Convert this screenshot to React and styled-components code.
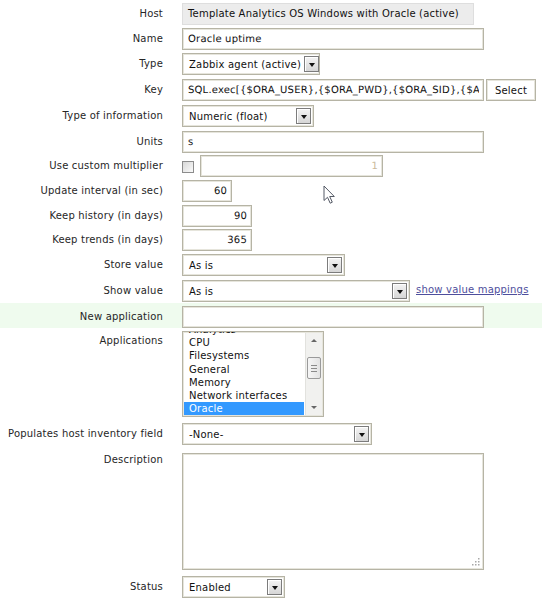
import React from "react";
import styled, { createGlobalStyle } from "styled-components";

const GlobalStyle = createGlobalStyle`
  html, body { margin: 0; padding: 0; background: #fff; }
  body {
    font-family: "DejaVu Sans", Verdana, sans-serif;
    font-size: 10px;
    letter-spacing: 0.2px;
    color: #222;
  }
`;

const Form = styled.div`
  position: relative;
  width: 542px;
  height: 600px;
  overflow: hidden;
`;

const Row = styled.div`
  display: grid;
  grid-template-columns: 182px 1fr;
  box-sizing: border-box;
  height: ${(p) => p.$h || 25}px;
  padding-top: 3px;
  background: ${(p) => (p.$highlight ? "#effbee" : "transparent")};
`;

const Label = styled.div`
  text-align: right;
  padding-right: 19px;
  padding-top: ${(p) => p.$top ?? 4}px;
  line-height: 14px;
  color: #262626;
  white-space: nowrap;
`;

const Field = styled.div`
  display: flex;
  align-items: flex-start;
  gap: ${(p) => p.$gap ?? 2}px;
`;

const frame = `
  box-sizing: border-box;
  border: 1px solid #b6b4a5;
  box-shadow: inset 0 0 0 1px #e6e5dc;
  background: #fff;
`;

const TextBox = styled.input`
  ${frame}
  width: ${(p) => p.$w}px;
  height: 22px;
  margin: 0;
  padding: 0 4px 0 5px;
  font: inherit;
  letter-spacing: inherit;
  line-height: 20px;
  text-rendering: geometricPrecision;
  color: ${(p) => (p.disabled ? "#c9b89a" : "#111")};
  text-align: ${(p) => p.$align || "left"};
  outline: none;
  &:disabled { background: #fff; }
`;

const StaticBox = styled.div`
  box-sizing: border-box;
  width: ${(p) => p.$w}px;
  height: 22px;
  padding: 0 5px;
  line-height: 20px;
  border: 1px solid #dedede;
  background: #ececec;
  color: #111;
  white-space: nowrap;
  overflow: hidden;
`;

const Dropdown = styled.div`
  ${frame}
  width: ${(p) => p.$w}px;
  height: 22px;
  display: flex;
  align-items: center;
  justify-content: space-between;
  gap: 3px;
  padding: 0 2px 0 6px;
  color: #111;
  white-space: nowrap;
`;

const DropArrow = styled.span`
  box-sizing: border-box;
  flex: none;
  width: 15px;
  height: 16px;
  border: 1px solid #7c7c7c;
  background: linear-gradient(#f4f4f4, #d6d6d6);
  box-shadow: inset 1px 1px 0 #fff;
  display: flex;
  align-items: center;
  justify-content: center;
  &::after {
    content: "";
    margin-top: 2px;
    border-left: 3.5px solid transparent;
    border-right: 3.5px solid transparent;
    border-top: 4px solid #111;
  }
`;

const Button = styled.button`
  ${frame}
  width: 50px;
  height: 22px;
  margin: 0;
  padding: 0;
  font: inherit;
  letter-spacing: inherit;
  color: #111;
`;

const Checkbox = styled.span`
  box-sizing: border-box;
  flex: none;
  width: 12px;
  height: 12px;
  margin: 6px 4px 0 0;
  border: 1px solid #8c8c8c;
  background: linear-gradient(135deg, #d8d8d8, #fafafa);
`;

const Link = styled.a`
  margin-left: 4px;
  line-height: 20px;
  color: #4e4e9c;
  text-decoration: underline;
  white-space: nowrap;
`;

const ListBox = styled.div`
  ${frame}
  width: 142px;
  height: 86px;
  display: flex;
  overflow: hidden;
`;

const ListItems = styled.div`
  flex: 1;
  padding: 1px 1px 0 1px;
  margin-top: -10px;
`;

const ListItem = styled.div`
  height: 13.2px;
  line-height: 13px;
  padding-left: 5px;
  white-space: nowrap;
  color: ${(p) => (p.$selected ? "#fff" : "#111")};
  background: ${(p) => (p.$selected ? "#3399ff" : "transparent")};
`;

const ScrollTrack = styled.div`
  flex: none;
  width: 16px;
  margin: 1px 1px 1px 0;
  background: #f1f1ef;
  border-left: 1px solid #e2e2de;
  display: flex;
  flex-direction: column;
  align-items: center;
`;

const ScrollArrow = styled.span`
  width: 0;
  height: 0;
  margin: ${(p) => (p.$up ? "6px 0 0" : "auto 0 6px")};
  border-left: 3px solid transparent;
  border-right: 3px solid transparent;
  ${(p) =>
    p.$up
      ? "border-bottom: 3px solid #666;"
      : "border-top: 3px solid #666;"}
`;

const ScrollThumb = styled.span`
  box-sizing: border-box;
  width: 14px;
  height: 22px;
  margin-top: 15px;
  border: 1px solid #9a9a9a;
  border-radius: 2px;
  background: linear-gradient(90deg, #f6f6f6, #e2e2e2);
  display: flex;
  flex-direction: column;
  align-items: center;
  justify-content: center;
  gap: 2px;
  & > i {
    display: block;
    width: 6px;
    height: 1px;
    background: #8a8a8a;
  }
`;

const AreaWrap = styled.div`
  position: relative;
  width: 302px;
  height: 117px;
`;

const TextArea = styled.textarea`
  ${frame}
  display: block;
  width: 100%;
  height: 100%;
  margin: 0;
  padding: 3px 5px;
  resize: none;
  font: inherit;
  outline: none;
`;

const Grip = styled.svg`
  position: absolute;
  right: 4px;
  bottom: 4px;
`;

const Pointer = styled.svg`
  position: absolute;
  left: 323px;
  top: 185px;
`;

const apps = ["Analytics", "CPU", "Filesystems", "General", "Memory", "Network interfaces", "Oracle"];

const Select = ({ w, children }) => (
  <Dropdown $w={w}>
    <span>{children}</span>
    <DropArrow />
  </Dropdown>
);

export default function App() {
  return (
    <>
      <GlobalStyle />
      <Form>
        <Row>
          <Label>Host</Label>
          <Field>
            <StaticBox $w={292}>Template Analytics OS Windows with Oracle (active)</StaticBox>
          </Field>
        </Row>
        <Row>
          <Label>Name</Label>
          <Field>
            <TextBox $w={302} defaultValue="Oracle uptime" />
          </Field>
        </Row>
        <Row $h={26}>
          <Label>Type</Label>
          <Field>
            <Select w={138}>Zabbix agent (active)</Select>
          </Field>
        </Row>
        <Row $h={26}>
          <Label>Key</Label>
          <Field>
            <TextBox $w={302} defaultValue="SQL.exec[{$ORA_USER},{$ORA_PWD},{$ORA_SID},{$ADDRESS},uptime]" />
            <Button>Select</Button>
          </Field>
        </Row>
        <Row $h={26}>
          <Label>Type of information</Label>
          <Field>
            <Select w={132}>Numeric (float)</Select>
          </Field>
        </Row>
        <Row $h={24}>
          <Label>Units</Label>
          <Field>
            <TextBox $w={302} defaultValue="s" />
          </Field>
        </Row>
        <Row>
          <Label>Use custom multiplier</Label>
          <Field $gap={2}>
            <Checkbox />
            <TextBox $w={183} $align="right" defaultValue="1" disabled />
          </Field>
        </Row>
        <Row>
          <Label>Update interval (in sec)</Label>
          <Field>
            <TextBox $w={50} $align="right" defaultValue="60" />
          </Field>
        </Row>
        <Row $h={24}>
          <Label>Keep history (in days)</Label>
          <Field>
            <TextBox $w={70} $align="right" defaultValue="90" />
          </Field>
        </Row>
        <Row>
          <Label>Keep trends (in days)</Label>
          <Field>
            <TextBox $w={70} $align="right" defaultValue="365" />
          </Field>
        </Row>
        <Row $h={26}>
          <Label>Store value</Label>
          <Field>
            <Select w={163}>As is</Select>
          </Field>
        </Row>
        <Row $h={26}>
          <Label>Show value</Label>
          <Field>
            <Select w={228}>As is</Select>
            <Link href="#">show value mappings</Link>
          </Field>
        </Row>
        <Row $highlight>
          <Label>New application</Label>
          <Field>
            <TextBox $w={302} defaultValue="" />
          </Field>
        </Row>
        <Row $h={92}>
          <Label $top={3}>Applications</Label>
          <Field>
            <ListBox>
              <ListItems>
                {apps.map((a) => (
                  <ListItem key={a} $selected={a === "Oracle"}>
                    {a}
                  </ListItem>
                ))}
              </ListItems>
              <ScrollTrack>
                <ScrollArrow $up />
                <ScrollThumb>
                  <i />
                  <i />
                  <i />
                </ScrollThumb>
                <ScrollArrow />
              </ScrollTrack>
            </ListBox>
          </Field>
        </Row>
        <Row $h={30}>
          <Label>Populates host inventory field</Label>
          <Field>
            <Select w={190}>-None-</Select>
          </Field>
        </Row>
        <Row $h={123}>
          <Label $top={0}>Description</Label>
          <Field>
            <AreaWrap>
              <TextArea defaultValue="" />
              <Grip width="8" height="8" viewBox="0 0 8 8">
                {[
                  [6, 0],
                  [3, 3],
                  [6, 3],
                  [0, 6],
                  [3, 6],
                  [6, 6],
                ].map(([x, y]) => (
                  <rect key={`${x}-${y}`} x={x} y={y} width="1.5" height="1.5" fill="#a8a8a8" />
                ))}
              </Grip>
            </AreaWrap>
          </Field>
        </Row>
        <Row $h={27}>
          <Label>Status</Label>
          <Field>
            <Select w={103}>Enabled</Select>
          </Field>
        </Row>
        <Pointer width="13" height="20" viewBox="0 0 13 20">
          <path
            d="M1 1 L1 15.5 L4.5 12.3 L7.2 18.2 L9.3 17.2 L6.7 11.5 L11.3 11.5 Z"
            fill="#fff"
            stroke="#555a66"
            strokeWidth="1"
            strokeLinejoin="round"
          />
        </Pointer>
      </Form>
    </>
  );
}
